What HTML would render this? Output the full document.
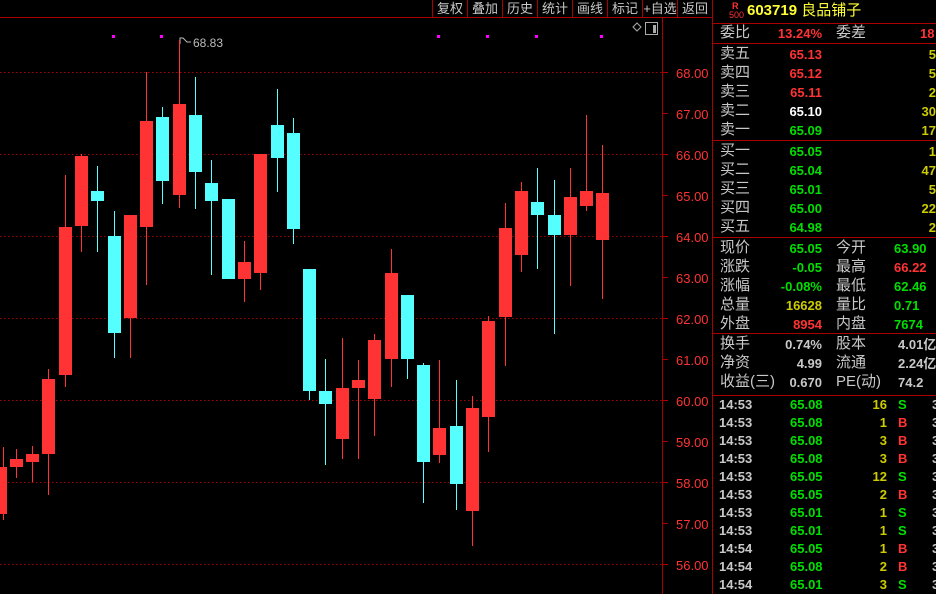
<!DOCTYPE html>
<html><head><meta charset="utf-8"><style>
body{margin:0;background:#000;width:936px;height:594px;overflow:hidden;position:relative;font-family:"Liberation Sans","WenQuanYi Zen Hei","Noto Sans CJK SC",sans-serif}
.t{position:absolute;white-space:nowrap;line-height:1}
.cn{font-size:15px;color:#c8c8c8}
.n{font-size:13px;font-weight:bold}
.tb{position:absolute;top:0;height:17px;border-left:1px solid #a00;color:#c8c8c8;font-size:13px;line-height:17px;text-align:center;width:34px}
.ax{position:absolute;left:676px;color:#ff3333;font-size:13px;font-family:"Liberation Sans",sans-serif}
.g{color:#00e000}.r{color:#ff3333}.w{color:#fff}.y{color:#cccc00}.gr{color:#c8c8c8}
</style></head><body>
<svg width="936" height="594" style="position:absolute;left:0;top:0">
<line x1="0" y1="17.5" x2="712" y2="17.5" stroke="#a00"/>
<line x1="662.5" y1="17" x2="662.5" y2="594" stroke="#a00"/>
<line x1="712.5" y1="0" x2="712.5" y2="594" stroke="#a00"/>
<g stroke="#a00" stroke-dasharray="1.5 2.5">
<line x1="0" y1="72.5" x2="662" y2="72.5"/><line x1="0" y1="154.5" x2="662" y2="154.5"/><line x1="0" y1="236.5" x2="662" y2="236.5"/><line x1="0" y1="318.5" x2="662" y2="318.5"/><line x1="0" y1="400.5" x2="662" y2="400.5"/><line x1="0" y1="482.5" x2="662" y2="482.5"/><line x1="0" y1="564.5" x2="662" y2="564.5"/>
</g>
<g stroke="#a00"><line x1="663" y1="72.5" x2="668" y2="72.5"/><line x1="663" y1="113.5" x2="668" y2="113.5"/><line x1="663" y1="154.5" x2="668" y2="154.5"/><line x1="663" y1="195.5" x2="668" y2="195.5"/><line x1="663" y1="236.5" x2="668" y2="236.5"/><line x1="663" y1="277.5" x2="668" y2="277.5"/><line x1="663" y1="318.5" x2="668" y2="318.5"/><line x1="663" y1="359.5" x2="668" y2="359.5"/><line x1="663" y1="400.5" x2="668" y2="400.5"/><line x1="663" y1="441.5" x2="668" y2="441.5"/><line x1="663" y1="482.5" x2="668" y2="482.5"/><line x1="663" y1="523.5" x2="668" y2="523.5"/><line x1="663" y1="564.5" x2="668" y2="564.5"/></g>
<g stroke="#a00"><line x1="712" y1="23.5" x2="936" y2="23.5"/><line x1="712" y1="43.5" x2="936" y2="43.5"/><line x1="712" y1="140.5" x2="936" y2="140.5"/><line x1="712" y1="237.5" x2="936" y2="237.5"/><line x1="712" y1="333.5" x2="936" y2="333.5"/><line x1="712" y1="395.5" x2="936" y2="395.5"/></g>
<g fill="#f0f">
<rect x="112" y="35" width="3" height="3"/><rect x="160" y="35" width="3" height="3"/><rect x="437" y="35" width="3" height="3"/><rect x="486" y="35" width="3" height="3"/><rect x="535" y="35" width="3" height="3"/><rect x="600" y="35" width="3" height="3"/>
</g>
<path d="M633 27 L637 23 L641 27 L637 31 Z" fill="none" stroke="#aaa"/>
<rect x="645.5" y="22.5" width="12" height="12" fill="none" stroke="#aaa"/><rect x="653" y="25" width="3" height="8" fill="#aaa"/>
<path d="M180 44 V38 H183 L187 42 H191" fill="none" stroke="#bbb"/>
<g id="c"></g>
</svg>
<div class="t" style="left:193px;top:37px;font-size:12px;color:#bbb">68.83</div>
<div class="ax" style="top:66px">68.00</div><div class="ax" style="top:107px">67.00</div><div class="ax" style="top:148px">66.00</div><div class="ax" style="top:189px">65.00</div><div class="ax" style="top:230px">64.00</div><div class="ax" style="top:271px">63.00</div><div class="ax" style="top:312px">62.00</div><div class="ax" style="top:353px">61.00</div><div class="ax" style="top:394px">60.00</div><div class="ax" style="top:435px">59.00</div><div class="ax" style="top:476px">58.00</div><div class="ax" style="top:517px">57.00</div><div class="ax" style="top:558px">56.00</div>
<div class="tb" style="left:432px">复权</div><div class="tb" style="left:467px">叠加</div><div class="tb" style="left:502px">历史</div><div class="tb" style="left:537px">统计</div><div class="tb" style="left:572px">画线</div><div class="tb" style="left:607px">标记</div><div class="tb" style="left:642px">+自选</div><div class="tb" style="left:677px">返回</div>
<div class="t r" style="left:732px;top:2px;font-size:9px;font-weight:bold">R</div>
<div class="t r" style="left:729px;top:11px;font-size:9px">500</div>
<div class="t" style="left:747px;top:3px;font-size:15px;color:#ffff33;font-weight:bold">603719 <span style="font-weight:normal">良品铺子</span></div>
<div id="p"></div>
<script>
var C=[[0,7,467,514,447,520,1],[10,13,459,467,449,478,1],[26,13,454,462,446,482,1],[42,13,379,454,369,495,1],[59,13,227,375,175,387,1],[75,13,156,226,154,252,1],[91,13,191,201,166,252,0],[108,13,236,333,211,358,0],[124,13,215,318,215,358,1],[140,13,121,227,72,285,1],[156,13,117,181,107,204,0],[173,13,104,195,40,208,1],[189,13,115,172,77,209,0],[205,13,183,201,160,275,0],[222,13,199,279,199,279,0],[238,13,262,279,241,302,1],[254,13,154,273,154,290,1],[271,13,125,158,89,192,0],[287,13,133,229,118,244,0],[303,13,269,391,269,400,0],[319,13,391,404,359,465,0],[336,13,388,439,338,459,1],[352,13,380,388,360,459,1],[368,13,340,399,334,436,1],[385,13,273,359,249,387,1],[401,13,295,359,295,379,0],[417,13,365,462,363,503,0],[433,13,428,455,360,463,1],[450,13,426,484,380,510,0],[466,13,408,511,396,546,1],[482,13,321,417,316,452,1],[499,13,228,317,203,366,1],[515,13,191,255,182,272,1],[531,13,202,215,168,269,0],[548,13,215,235,180,334,0],[564,13,197,235,168,286,1],[580,13,191,206,115,211,1],[596,13,193,240,145,299,1]];
var s='';C.forEach(function(c){var col=c[6]?'#ff3333':'#55ffff';var cx=c[0]+(c[1]==7?3:6);s+='<line x1="'+(cx+.5)+'" y1="'+c[4]+'" x2="'+(cx+.5)+'" y2="'+c[5]+'" stroke="'+col+'"/><rect x="'+c[0]+'" y="'+c[2]+'" width="'+c[1]+'" height="'+(c[3]-c[2])+'" fill="'+col+'"/>';});
document.getElementById('c').innerHTML=s;
var h='';function T(x,y,cls,txt,right){h+='<div class="t '+cls+'" style="'+(right?'right:'+(936-x):'left:'+x)+'px;top:'+y+'px">'+txt+'</div>';}
T(720,25,'cn','委比');T(822,27,'n r','13.24%',1);T(836,25,'cn','委差');T(920,27,'n r','18');
var sl=['卖五','卖四','卖三','卖二','卖一'],sp=['65.13','65.12','65.11','65.10','65.09'],sc=['r','r','r','w','g'],sv=['5','5','2','30','17'];
for(var i=0;i<5;i++){var y=46+i*19;T(720,y,'cn',sl[i]);T(822,y+2,'n '+sc[i],sp[i],1);T(936,y+2,'n y',sv[i],1);}
var bl=['买一','买二','买三','买四','买五'],bp=['65.05','65.04','65.01','65.00','64.98'],bv=['1','47','5','22','2'];
for(var i=0;i<5;i++){var y=143+i*19;T(720,y,'cn',bl[i]);T(822,y+2,'n g',bp[i],1);T(936,y+2,'n y',bv[i],1);}
var L=[['现价','65.05','g','今开','63.90','g'],['涨跌','-0.05','g','最高','66.22','r'],['涨幅','-0.08%','g','最低','62.46','g'],['总量','16628','y','量比','0.71','g'],['外盘','8954','r','内盘','7674','g']];
for(var i=0;i<5;i++){var y=240+i*19;T(720,y,'cn',L[i][0]);T(822,y+2,'n '+L[i][2],L[i][1],1);T(836,y,'cn',L[i][3]);T(894,y+2,'n '+L[i][5],L[i][4]);}
var M=[['换手','0.74%','股本','4.01亿'],['净资','4.99','流通','2.24亿'],['收益(三)','0.670','PE(动)','74.2']];
for(var i=0;i<3;i++){var y=336+i*19;T(720,y,'cn',M[i][0]);T(822,y+2,'n gr',M[i][1],1);T(836,y,'cn',M[i][2]);T(898,y+2,'n gr',M[i][3]);}
var R=[['14:53','65.08','16','S'],['14:53','65.08','1','B'],['14:53','65.08','3','B'],['14:53','65.08','3','B'],['14:53','65.05','12','S'],['14:53','65.05','2','B'],['14:53','65.01','1','S'],['14:53','65.01','1','S'],['14:54','65.05','1','B'],['14:54','65.08','2','B'],['14:54','65.01','3','S']];
for(var i=0;i<11;i++){var y=398+i*18;T(719,y,'n gr',R[i][0]);T(790,y,'n g',R[i][1]);T(887,y,'n y',R[i][2],1);T(898,y,'n '+(R[i][3]=='B'?'r':'g'),R[i][3]);T(932,y,'n gr','3');}
document.getElementById('p').innerHTML=h;
</script>
</body></html>
